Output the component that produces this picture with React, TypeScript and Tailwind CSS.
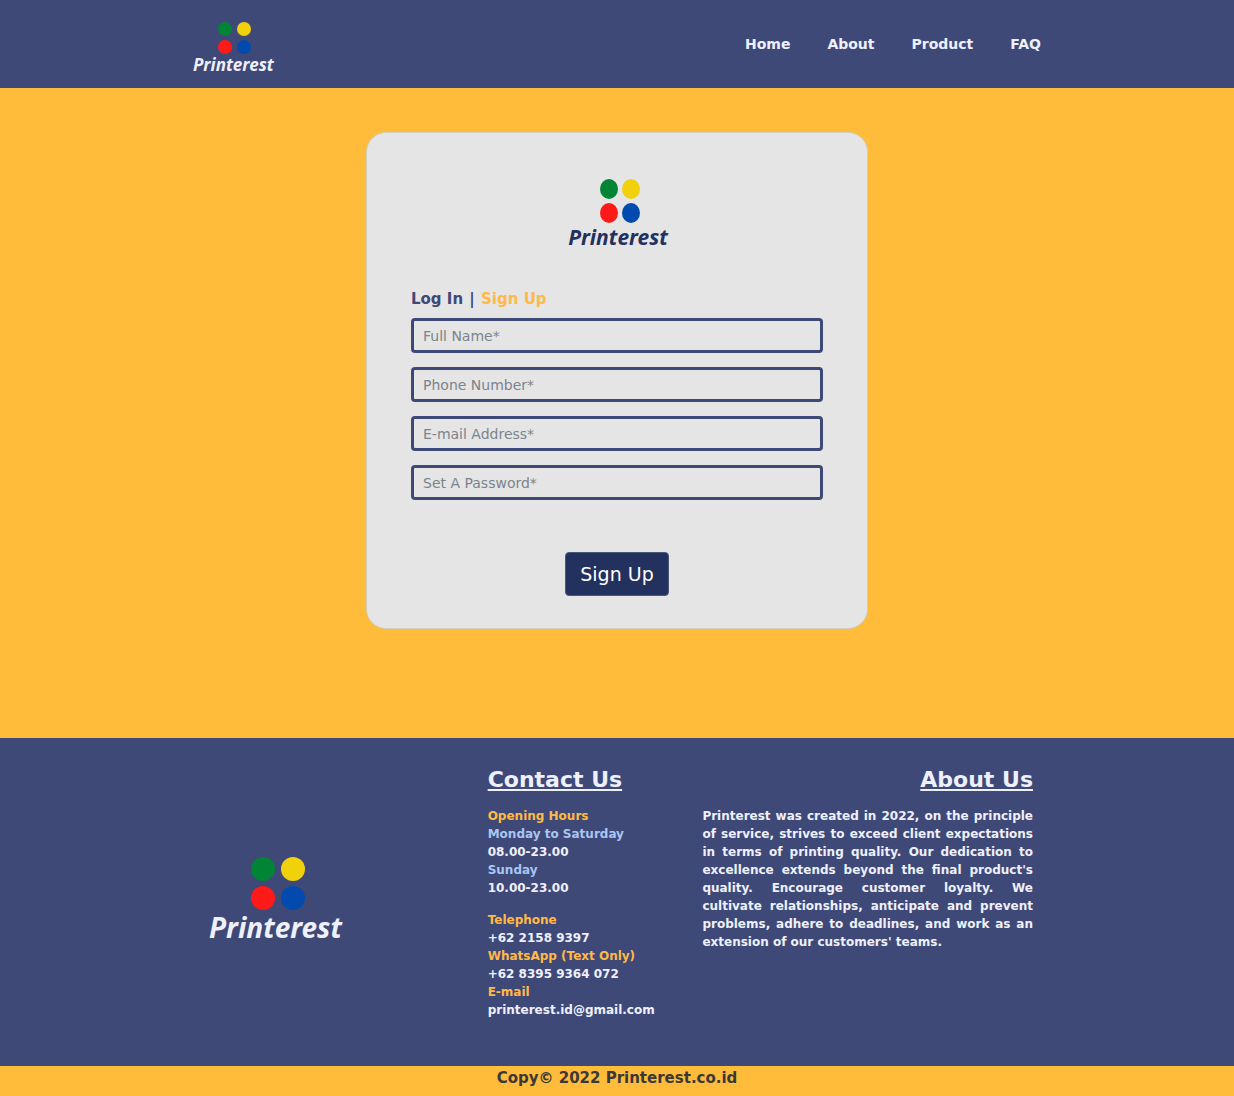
import type { ReactNode } from "react";

const navLinks = ["Home", "About", "Product", "FAQ"];

const fields = [
  { id: "full-name", label: "Full Name*", type: "text" },
  { id: "phone", label: "Phone Number*", type: "tel" },
  { id: "email", label: "E-mail Address*", type: "email" },
  { id: "password", label: "Set A Password*", type: "password" },
];

function Dots({ className, rx, ry, dx, dy }: { className: string; rx: number; ry: number; dx: number; dy: number }) {
  const width = dx + rx * 2;
  const height = dy + ry * 2;
  return (
    <svg className={className} width={width} height={height} viewBox={`0 0 ${width} ${height}`} aria-hidden="true">
      <ellipse cx={rx} cy={ry} rx={rx} ry={ry} fill="#028436" />
      <ellipse cx={rx + dx} cy={ry} rx={rx} ry={ry} fill="#f1d10b" />
      <ellipse cx={rx} cy={ry + dy} rx={rx} ry={ry} fill="#ff1a1a" />
      <ellipse cx={rx + dx} cy={ry + dy} rx={rx} ry={ry} fill="#024aad" />
    </svg>
  );
}

function Wordmark({ className }: { className: string }) {
  return <span className={`font-['Noto_Sans',sans-serif] font-bold italic ${className}`}>Printerest</span>;
}

function Heading({ children, className = "" }: { children: ReactNode; className?: string }) {
  return (
    <h2 className={`mb-[11px] text-[22px] leading-8 font-bold underline decoration-2 underline-offset-2 ${className}`}>
      {children}
    </h2>
  );
}

export default function App() {
  return (
    <div className="flex min-h-screen flex-col bg-[#ffbc3b] font-['DejaVu_Sans',Verdana,sans-serif]">
      <header className="bg-[#3f4977] text-[#eef0fb]">
        <div className="mx-auto flex h-22 max-w-[848px] items-center justify-between">
          <a href="#" className="flex flex-col items-center pt-2.5">
            <Dots className="ml-0.5" rx={7} ry={7} dx={19} dy={18} />
            <Wordmark className="text-[17px] leading-[22px]" />
          </a>
          <nav className="flex gap-[37px] text-sm font-bold">
            {navLinks.map((name) => (
              <a key={name} href="#">
                {name}
              </a>
            ))}
          </nav>
        </div>
      </header>

      <main className="grow px-4 pt-11 pb-[109px]">
        <form className="mx-auto flex max-w-[502px] flex-col rounded-[20px] border border-[#d3cdbd] bg-[#e5e5e5] px-11 pt-[46px] pb-8">
          <div className="flex flex-col items-center pl-0.5 text-[#22315d]">
            <Dots className="ml-1" rx={9} ry={10} dx={22} dy={24} />
            <Wordmark className="text-[21px] leading-7" />
          </div>
          <div className="mt-9 mb-[7px] text-[15px] leading-6 font-bold text-[#3f4977]">
            <a href="#">Log In</a> <span className="mx-px">|</span>{" "}
            <a href="#" className="text-[#ffb947]">
              Sign Up
            </a>
          </div>
          <div className="flex flex-col gap-[14px]">
            {fields.map((f) => (
              <input
                key={f.id}
                id={f.id}
                type={f.type}
                aria-label={f.label}
                placeholder={f.label}
                className="h-[35px] w-full rounded-sm border-3 border-[#3f4977] px-[9px] text-sm text-[#22315d] placeholder:text-[#7b848c]"
              />
            ))}
          </div>
          <button
            type="button"
            className="mt-13 h-11 self-center rounded-sm border border-[#4b5779] bg-[#22315d] px-[14px] text-[19px] text-white"
          >
            Sign Up
          </button>
        </form>
      </main>

      <footer>
        <div className="bg-[#3f4977] text-[#eef0fb]">
          <div className="mx-auto grid max-w-[848px] grid-cols-[279fr_215fr_331fr] pt-[26px] pr-2 pb-[47px] pl-4 text-xs leading-[18px] font-bold">
            <div className="flex flex-col items-center justify-self-start pt-[93px]">
              <Dots className="ml-1.5" rx={12} ry={12} dx={30} dy={29} />
              <Wordmark className="text-[28px] leading-[34px]" />
            </div>
            <section>
              <Heading>Contact Us</Heading>
              <div className="mb-[14px]">
                <p className="text-[#ffb947]">Opening Hours</p>
                <p className="text-[#a9c6f2]">Monday to Saturday</p>
                <p>08.00-23.00</p>
                <p className="text-[#a9c6f2]">Sunday</p>
                <p>10.00-23.00</p>
              </div>
              <p className="text-[#ffb947]">Telephone</p>
              <p>+62 2158 9397</p>
              <p className="text-[#ffb947]">WhatsApp (Text Only)</p>
              <p>+62 8395 9364 072</p>
              <p className="text-[#ffb947]">E-mail</p>
              <p>printerest.id@gmail.com</p>
            </section>
            <section>
              <Heading className="text-right">About Us</Heading>
              <p className="text-justify">
                Printerest was created in 2022, on the principle of service, strives to exceed client expectations in
                terms of printing quality. Our dedication to excellence extends beyond the final product's quality.
                Encourage customer loyalty. We cultivate relationships, anticipate and prevent problems, adhere to
                deadlines, and work as an extension of our customers' teams.
              </p>
            </section>
          </div>
        </div>
        <p className="pb-1.5 text-center text-[15px] leading-6 font-bold text-[#3a3838]">
          Copy© 2022 Printerest.co.id
        </p>
      </footer>
    </div>
  );
}
